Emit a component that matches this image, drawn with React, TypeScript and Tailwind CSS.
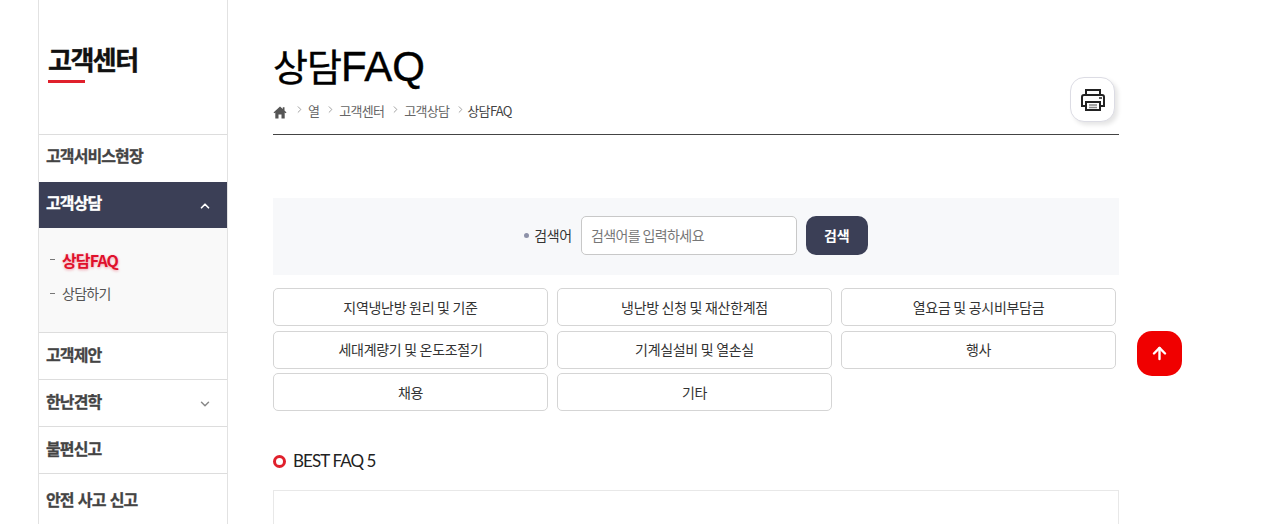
import React from 'react';
import { ChevronUp, ChevronDown, ChevronRight, ArrowUp } from 'lucide-react';

const categories = [
  '지역냉난방 원리 및 기준',
  '냉난방 신청 및 재산한계점',
  '열요금 및 공시비부담금',
  '세대계량기 및 온도조절기',
  '기계실설비 및 열손실',
  '행사',
  '채용',
  '기타',
];

const crumbs = ['열', '고객센터', '고객상담'];

const PrinterIcon = () => (
  <svg width="26" height="24" viewBox="0 0 26 24" fill="none" stroke="#222" strokeWidth="2">
    <path d="M6 7V2h14v5" />
    <path d="M6 18H2V9a2 2 0 0 1 2-2h18a2 2 0 0 1 2 2v9h-4" />
    <path d="M6 14h14v8H6z" />
    <path d="M9 17h8M9 19.500h8" stroke="#888" strokeWidth="1.500" />
    <path d="M19 10h3" strokeWidth="1.500" />
  </svg>
);

const HomeIcon = () => (
  <svg width="14" height="13" viewBox="0 0 14 13" className="mr-[7px] mt-[3px]" fill="#555555">
    <path d="M7 0.500 0.500 6.500 1.300 7.300 2.300 6.400V12.500H5.500V8.500H8.500V12.500H11.700V6.400L12.700 7.300 13.500 6.500 11.500 4.600V1.200H9.800V3.100Z" />
  </svg>
);

const SideItem = ({ label, icon, h = 'h-[47px]' }: { label: string; icon?: React.ReactNode; h?: string }) => (
  <div className={`flex items-center justify-between border-t border-[#dddddd] pl-[7px] pr-[15px] ${h}`}>
    <span className="-mt-[4px] text-[16px] font-bold tracking-[-0.9px] [word-spacing:1.500px] text-[#444444] [-webkit-text-stroke:0.3px_#444444]">{label}</span>
    {icon}
  </div>
);

export default function App() {
  return (
    <div className="relative h-[524px] w-[1279px] overflow-hidden bg-white font-['Noto_Sans_CJK_KR','Noto_Sans',sans-serif]">
      <div className="flex h-full items-start pl-[38px]">
        {/* left menu */}
        <aside className="h-full w-[190px] shrink-0 border-x border-[#e2e2e2]">
          <div className="h-[134px] pl-[9px] pt-[41px]">
            <div className="text-[26px] leading-[36px] font-bold tracking-[-1.500px] text-[#111111] [-webkit-text-stroke:0.4px_#111111]">고객센터</div>
            <div className="mt-[3px] h-[3px] w-[37px] bg-[#e0202c]" />
          </div>
          <SideItem label="고객서비스현장" h="h-[48px] pb-[4px]" />
          <div className="flex h-[46px] items-center justify-between bg-[#3b3f56] pl-[7px] pr-[15px]">
            <span className="-mt-[7px] text-[16px] font-bold tracking-[-0.9px] text-white [-webkit-text-stroke:0.3px_#ffffff]">고객상담</span>
            <ChevronUp size={14} strokeWidth={3} className="mt-[2px] text-white" />
          </div>
          <div className="h-[104px] bg-[#f9f9f9] pl-[11px] pt-[15px]">
            <div className="flex h-[33px] items-center gap-[7px]">
              <span className="h-[1.500px] w-[5px] bg-[#777777]" />
              <span className="text-[16px] font-bold tracking-[-0.9px] text-[#e0102c] [text-shadow:0_1px_3px_rgba(224,16,44,0.4)]">상담FAQ</span>
            </div>
            <div className="flex h-[35px] items-center gap-[7px]">
              <span className="h-[1.500px] w-[5px] bg-[#777777]" />
              <span className="text-[14px] tracking-[-0.7px] text-[#555555]">상담하기</span>
            </div>
          </div>
          <SideItem label="고객제안" />
          <SideItem label="한난견학" icon={<ChevronDown size={14} strokeWidth={2.500} className="mt-[2px] text-[#888888]" />} />
          <SideItem label="불편신고" />
          <SideItem label="안전 사고 신고" h="h-[56px] pb-[2px]" />
        </aside>

        {/* content */}
        <main className="ml-[45px] w-[846px]">
          <h1 className="mt-[38px] h-[54px] text-[38px] leading-[54px] font-normal tracking-[-1px] text-black [-webkit-text-stroke:0.4px_#000000]">
            상담<span className="font-['Liberation_Sans',sans-serif] text-[42px] tracking-[0px]">FAQ</span>
          </h1>
          <nav className="mt-[6px] flex h-[26px] items-center text-[13px] tracking-[-0.7px] text-[#666666]">
            <HomeIcon />
            {crumbs.map((c) => (
              <React.Fragment key={c}>
                <ChevronRight size={11} className="mr-[3px] -mt-[3px] text-[#999999]" />
                <span className="mr-[6px]">{c}</span>
              </React.Fragment>
            ))}
            <ChevronRight size={11} className="mr-[1px] -mt-[3px] text-[#999999]" />
            <span className="text-[#444444]">상담FAQ</span>
          </nav>
          <div className="mt-[10px] h-px bg-[#444444]" />

          <div className="mt-[63px] flex h-[77px] items-center justify-center bg-[#f7f8fa] pb-[2px]">
            <span className="mr-[5px] h-[5px] w-[5px] rounded-full bg-[#8d91a8]" />
            <span className="mr-[9px] text-[14px] tracking-[-0.3px] text-[#333333]">검색어</span>
            <div className="flex h-[39px] w-[216px] items-center rounded-[5px] border border-[#c8c8c8] bg-white pl-[9px] text-[14px] tracking-[-0.6px] text-[#777777]">
              검색어를 입력하세요
            </div>
            <div className="ml-[9px] flex h-[39px] w-[62px] items-center justify-center rounded-[10px] bg-[#3b3f56] text-[14px] font-bold text-white">
              검색
            </div>
          </div>

          <div className="mt-[13px] grid w-[843px] grid-cols-3 gap-x-[9px] gap-y-[4.500px]">
            {categories.map((c) => (
              <div
                key={c}
                className="flex h-[38px] items-center justify-center rounded-[5px] border border-[#d5d5d5] text-[14px] tracking-[-0.3px] text-[#333333]"
              >
                {c}
              </div>
            ))}
          </div>

          <div className="mt-[37px] flex h-[26px] items-center gap-[7px]">
            <span className="h-[13px] w-[13px] rounded-full border-[3.500px] border-[#e0202c]" />
            <span className="font-['Lato',sans-serif] text-[17px] tracking-[-0.9px] text-[#222222]">BEST FAQ 5</span>
          </div>
          <div className="mt-[16px] h-[60px] border border-[#e8e8e8]" />
        </main>
      </div>

      {/* floating buttons */}
      <div className="absolute left-[1070px] top-[77px] flex h-[45px] w-[45px] items-center justify-center rounded-[14px] border border-[#dcdce4] bg-white shadow-[3px_3px_4px_rgba(0,0,0,0.1)]">
        <PrinterIcon />
      </div>
      <div className="absolute left-[1137px] top-[331px] flex h-[45px] w-[45px] items-center justify-center rounded-[15px] bg-[#f00000]">
        <ArrowUp size={19} strokeWidth={3} className="text-white" />
      </div>
    </div>
  );
}
